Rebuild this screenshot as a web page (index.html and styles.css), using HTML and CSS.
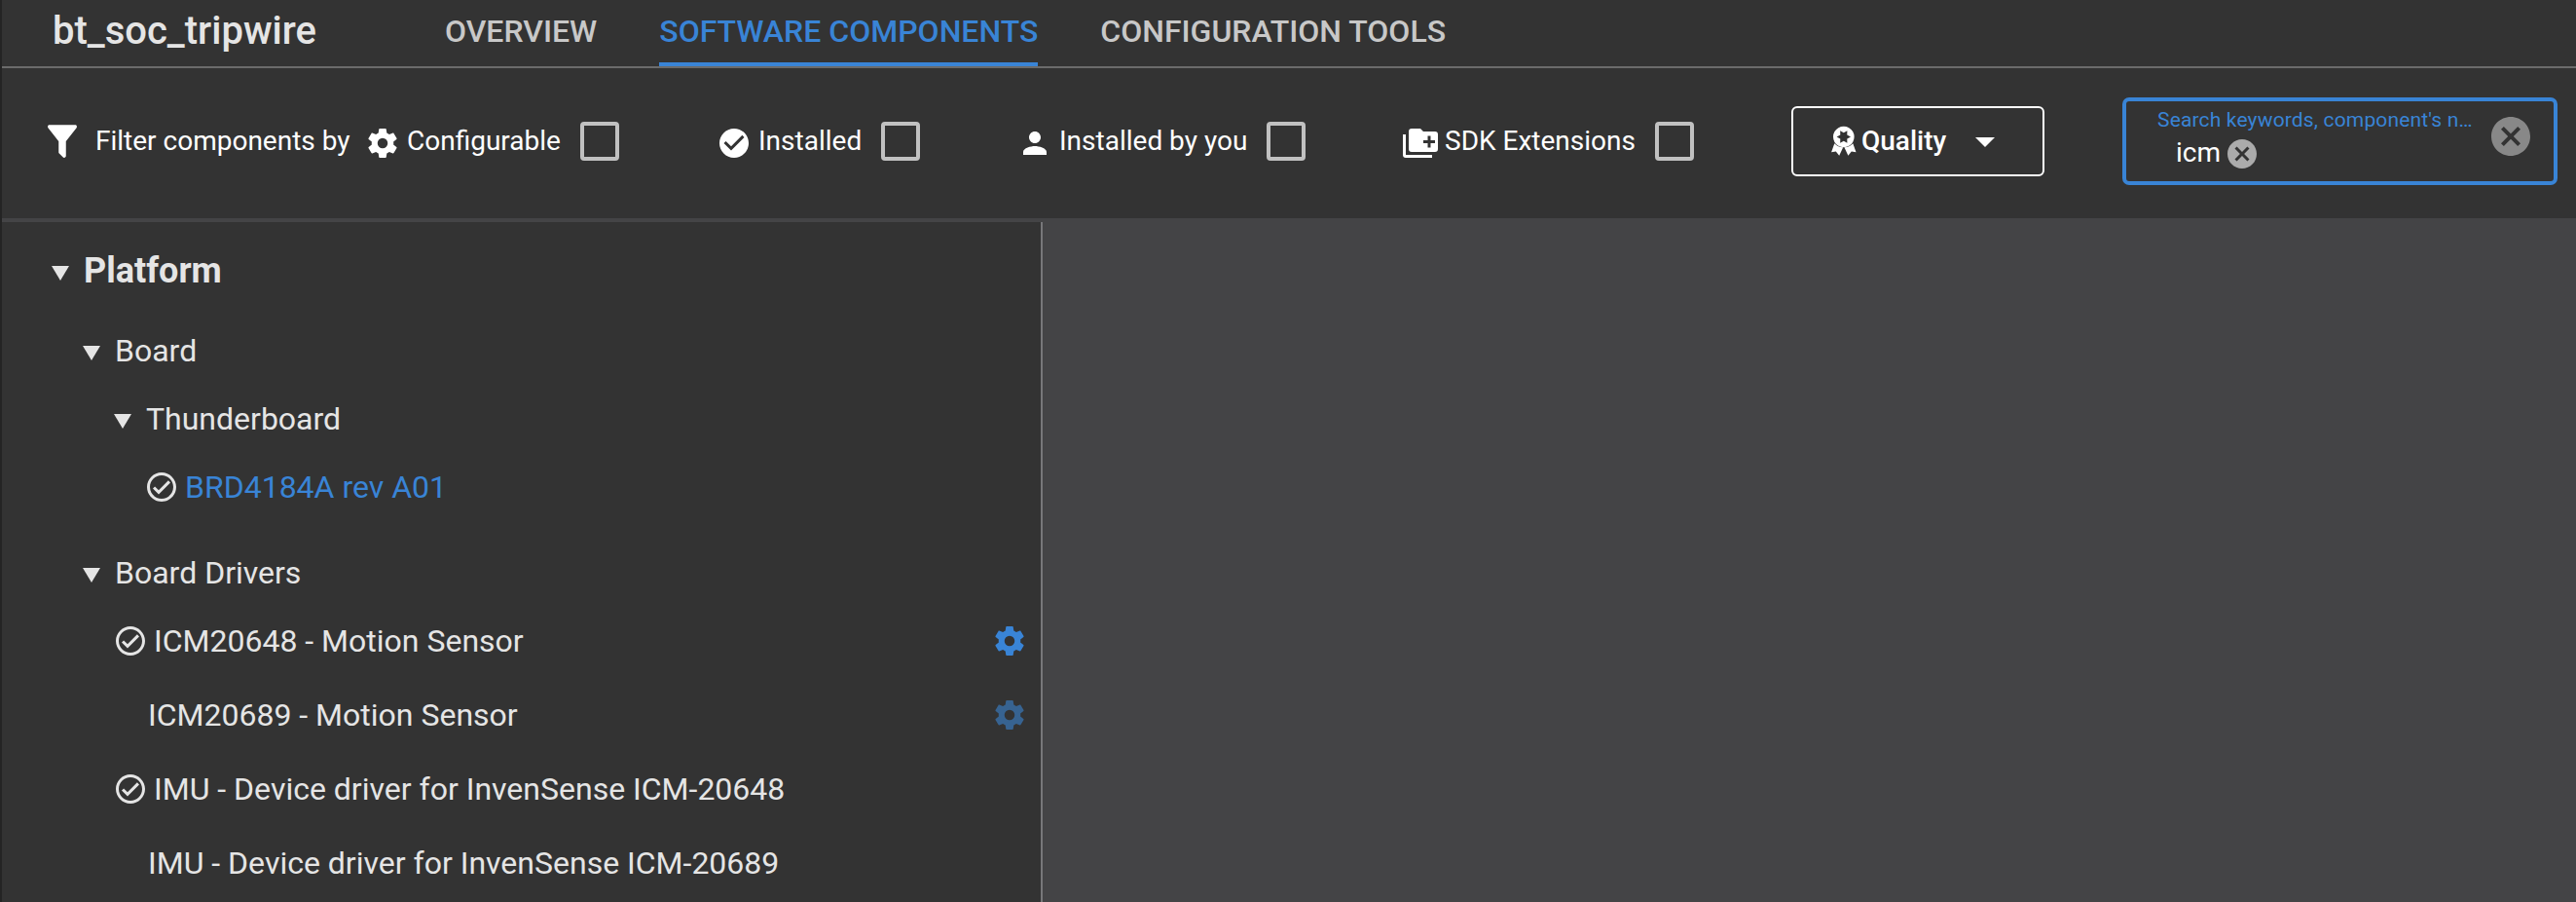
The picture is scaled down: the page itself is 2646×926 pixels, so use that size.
FILE: index.html
```html
<!DOCTYPE html>
<html lang="en">
<head>
<meta charset="utf-8">
<title>bt_soc_tripwire</title>
<link rel="stylesheet" href="styles.css">
</head>
<body>
<svg class="sprite" aria-hidden="true">
  <symbol id="cog" viewBox="0 0 24 24"><path d="M12,15.5A3.5,3.5 0 0,1 8.5,12A3.5,3.5 0 0,1 12,8.5A3.5,3.5 0 0,1 15.5,12A3.5,3.5 0 0,1 12,15.5M19.43,12.97C19.47,12.65 19.5,12.33 19.5,12C19.5,11.67 19.47,11.34 19.43,11L21.54,9.37C21.73,9.22 21.78,8.95 21.66,8.73L19.66,5.27C19.54,5.05 19.27,4.96 19.05,5.05L16.56,6.05C16.04,5.66 15.5,5.32 14.87,5.07L14.5,2.42C14.46,2.18 14.25,2 14,2H10C9.75,2 9.54,2.18 9.5,2.42L9.13,5.07C8.5,5.32 7.96,5.66 7.44,6.05L4.95,5.05C4.73,4.96 4.46,5.05 4.34,5.27L2.34,8.73C2.21,8.95 2.27,9.22 2.46,9.37L4.57,11C4.53,11.34 4.5,11.67 4.5,12C4.5,12.33 4.53,12.65 4.57,12.97L2.46,14.63C2.27,14.78 2.21,15.05 2.34,15.27L4.34,18.73C4.46,18.95 4.73,19.03 4.95,18.95L7.44,17.94C7.96,18.34 8.5,18.68 9.13,18.93L9.5,21.58C9.54,21.82 9.75,22 10,22H14C14.25,22 14.46,21.82 14.5,21.58L14.87,18.93C15.5,18.67 16.04,18.34 16.56,17.94L19.05,18.95C19.27,19.03 19.54,18.95 19.66,18.73L21.66,15.27C21.78,15.05 21.73,14.78 21.54,14.63L19.43,12.97Z"/></symbol>
  <symbol id="check-outline" viewBox="0 0 24 24"><path d="M12 2C6.5 2 2 6.5 2 12S6.5 22 12 22 22 17.5 22 12 17.5 2 12 2M12 20C7.59 20 4 16.41 4 12S7.59 4 12 4 20 7.59 20 12 16.41 20 12 20M16.59 7.58L10 14.17L7.41 11.59L6 13L10 17L18 9L16.59 7.58Z"/></symbol>
  <symbol id="cancel" viewBox="0 0 24 24"><path d="M12 2C6.47 2 2 6.47 2 12s4.47 10 10 10 10-4.47 10-10S17.53 2 12 2zm5 13.59L15.59 17 12 13.41 8.41 17 7 15.59 10.59 12 7 8.41 8.41 7 12 10.59 15.59 7 17 8.41 13.41 12 17 15.59z"/></symbol>
  <symbol id="caret" viewBox="0 0 18 15"><path d="M0 0H18L9 15Z"/></symbol>
</svg>
<div class="app">
  <header class="header">
    <h1 class="title">bt_soc_tripwire</h1>
    <nav class="tabs">
      <a class="tab">OVERVIEW</a>
      <a class="tab tab-active">SOFTWARE COMPONENTS</a>
      <a class="tab">CONFIGURATION TOOLS</a>
    </nav>
  </header>

  <section class="filters">
    <div class="filter-label">
      <svg class="funnel" viewBox="4 3 16 18"><path d="M14,12V19.88C14.04,20.18 13.94,20.5 13.71,20.71C13.32,21.1 12.69,21.1 12.3,20.71L10.29,18.7C10.06,18.47 9.96,18.16 10,17.87V12H9.97L4.21,4.62C3.87,4.19 3.95,3.56 4.38,3.22C4.57,3.08 4.78,3 5,3H19C19.22,3 19.43,3.08 19.62,3.22C20.05,3.56 20.13,4.19 19.79,4.62L14.03,12H14Z"/></svg>
      <span class="text">Filter components by</span>
    </div>
    <label class="filter">
      <svg class="icon"><use href="#cog"/></svg>
      <span class="text">Configurable</span><span class="checkbox"></span>
    </label>
    <label class="filter">
      <svg class="icon" viewBox="0 0 24 24"><path d="M12 2C6.5 2 2 6.5 2 12S6.5 22 12 22 22 17.5 22 12 17.5 2 12 2M10 17L5 12L6.41 10.59L10 14.17L17.59 6.58L19 8L10 17Z"/></svg>
      <span class="text">Installed</span><span class="checkbox"></span>
    </label>
    <label class="filter">
      <svg class="icon" viewBox="0 0 24 24"><path d="M12 12c2.21 0 4-1.79 4-4s-1.79-4-4-4-4 1.79-4 4 1.79 4 4 4zm0 2c-2.67 0-8 1.34-8 4v2h16v-2c0-2.66-5.33-4-8-4z"/></svg>
      <span class="text">Installed by you</span><span class="checkbox"></span>
    </label>
    <label class="filter">
      <svg class="icon" viewBox="0 0 24 24"><path d="M22,4A2,2 0 0,1 24,6V16A2,2 0 0,1 22,18H6A2,2 0 0,1 4,16V4A2,2 0 0,1 6,2H12L14,4H22M2,6V20H20V22H2A2,2 0 0,1 0,20V6H2M14,10V12H17V15H19V12H22V10H19V7H17V10H14Z"/></svg>
      <span class="text">SDK Extensions</span><span class="checkbox"></span>
    </label>
    <button class="quality">
      <svg class="ribbon" viewBox="11 9 26 32"><path fill-rule="evenodd" d="M23.8 9.7a10.8 10.8 0 1 0 .01 0ZM31 20.5L27.3 22.6L27.4 26.8L23.8 24.7L20.2 26.8L20.3 22.6L16.6 20.5L20.3 18.4L20.2 14.2L23.8 16.3L27.4 14.2L27.3 18.4Z"/><path d="M14.3 27.2L11.1 36.2L15.8 35.5L19.2 39.8L23.2 31.2Q18 31 14.3 27.2ZM33.3 27.2L36.5 36.2L31.8 35.5L28.4 39.8L24.4 31.2Q29.6 31 33.3 27.2Z"/></svg>
      <span class="quality-text">Quality</span>
      <svg class="drop" viewBox="0 0 20 10"><path d="M0 0H20L10 10Z"/></svg>
    </button>
    <div class="search">
      <div class="search-main">
        <div class="search-label">Search keywords, component's n…</div>
        <div class="chip">icm<svg class="chip-remove"><use href="#cancel"/></svg></div>
      </div>
      <svg class="search-clear"><use href="#cancel"/></svg>
    </div>
  </section>

  <main class="body">
    <aside class="tree">
      <div class="row row-root level-0"><svg class="caret"><use href="#caret"/></svg>Platform</div>
      <div class="row row-board level-1"><svg class="caret"><use href="#caret"/></svg>Board</div>
      <div class="row level-2"><svg class="caret"><use href="#caret"/></svg>Thunderboard</div>
      <div class="row leaf level-2"><svg class="icon"><use href="#check-outline"/></svg><span class="link">BRD4184A rev A01</span></div>
      <div class="row row-drivers level-1"><svg class="caret"><use href="#caret"/></svg>Board Drivers</div>
      <div class="row leaf level-1"><svg class="icon"><use href="#check-outline"/></svg>ICM20648 - Motion Sensor<svg class="icon cog"><use href="#cog"/></svg></div>
      <div class="row row-component level-2">ICM20689 - Motion Sensor<svg class="icon cog cog-dim"><use href="#cog"/></svg></div>
      <div class="row row-component leaf level-1"><svg class="icon"><use href="#check-outline"/></svg>IMU - Device driver for InvenSense ICM-20648</div>
      <div class="row row-component level-2">IMU - Device driver for InvenSense ICM-20689</div>
    </aside>
    <section class="detail"></section>
  </main>
</div>
</body>
</html>
```
FILE: styles.css
```css
* { box-sizing: border-box; }

body {
  margin: 0;
  background: #333333;
  color: #e5e5e5;
  font-family: Roboto, sans-serif;
  font-size: 32px;
}

svg { display: block; fill: currentColor; flex: none; }

.sprite { position: absolute; width: 0; height: 0; }

.app {
  display: flex;
  flex-direction: column;
  height: 926px;
  overflow: hidden;
  border-left: 2px solid #242424;
}

.header {
  display: flex;
  height: 70px;
  padding-left: 52px;
  border-bottom: 2px solid #6b6b6b;
}

.title {
  width: 403px;
  margin: 0;
  font-size: 40px;
  font-weight: 500;
  line-height: 63px;
}

.tabs { display: flex; gap: 64px; }

.tab {
  height: 68px;
  font-weight: 500;
  line-height: 64px;
  color: #c8c8c8;
}

.tab-active { color: #3984d6; border-bottom: 4px solid #3984d6; }

.filters {
  display: grid;
  grid-template-columns: 326px 361px 309px 396px 399px 340px 447px;
  align-items: center;
  height: 158px;
  padding: 0 0 4px 47px;
  border-bottom: 4px solid #444446;
  color: #fff;
  font-size: 28px;
}

.filter-label, .filter { display: flex; align-items: center; height: 40px; }

.filter-label { gap: 19px; }

.funnel { width: 30px; height: 34px; }

.icon { width: 36px; height: 36px; }

.filter .icon { margin: 4px 7px 0 0; }

.text { line-height: 38px; }

.checkbox {
  width: 40px;
  height: 40px;
  margin-left: 20px;
  border: 4px solid #c1c1c1;
  border-radius: 4px;
}

.quality {
  display: flex;
  align-items: center;
  width: 260px;
  height: 72px;
  padding: 0 0 0 39px;
  border: 2px solid #fff;
  border-radius: 6px;
  background: none;
  color: #fff;
  font: 500 28px/36px Roboto, sans-serif;
}

.ribbon { width: 26px; height: 32px; margin-right: 5px; }

.quality-text { width: 117px; text-align: left; }

.drop { width: 20px; height: 10px; margin-top: 2px; }

.search {
  display: flex;
  align-items: center;
  justify-content: space-between;
  width: 447px;
  height: 90px;
  padding: 0 20px 0 32px;
  border: 4px solid #3984d6;
  border-radius: 7px;
}

.search-main { height: 82px; padding-top: 5px; }

.search-label {
  height: 26px;
  color: #3984d6;
  font-size: 21px;
  letter-spacing: 0.16px;
  line-height: 28px;
}

.chip {
  display: flex;
  align-items: center;
  height: 36px;
  margin-top: 4px;
  padding-left: 19px;
  line-height: 36px;
}

.chip-remove { width: 36px; height: 36px; margin: 1px 0 0 4px; color: #ababab; }

.search-clear { width: 48px; height: 48px; margin-bottom: 10px; color: #888; }

.body { display: flex; flex: 1; min-height: 0; }

.tree {
  width: 1069px;
  padding-top: 15px;
  border-right: 2px solid #77777a;
}

.detail { flex: 1; background: #444446; }

.row {
  display: flex;
  align-items: center;
  height: 70px;
  line-height: 70px;
}

.level-0 { padding-left: 51px; }
.level-1 { padding-left: 83px; }
.level-2 { padding-left: 115px; }

.leaf.level-1 { padding-left: 114px; }
.leaf.level-2 { padding-left: 146px; }
.row-component.level-2 { padding-left: 150px; }

.row-root { font-size: 36px; font-weight: 700; }
.row-board { margin-top: 12px; }
.row-drivers { margin-top: 18px; }
.row-component { height: 76px; }
.leaf + .row-component { margin-top: 3px; }
.row-component + .row-component { margin-top: 0; }

.caret { width: 18px; height: 15px; margin: 4px 15px 0 0; }

.leaf > .icon:first-child { margin-right: 6px; }

.row .cog { margin: 0 14px 0 auto; color: #3984d6; }
.row .cog-dim { color: #376391; }

.link { color: #3984d6; }
```
